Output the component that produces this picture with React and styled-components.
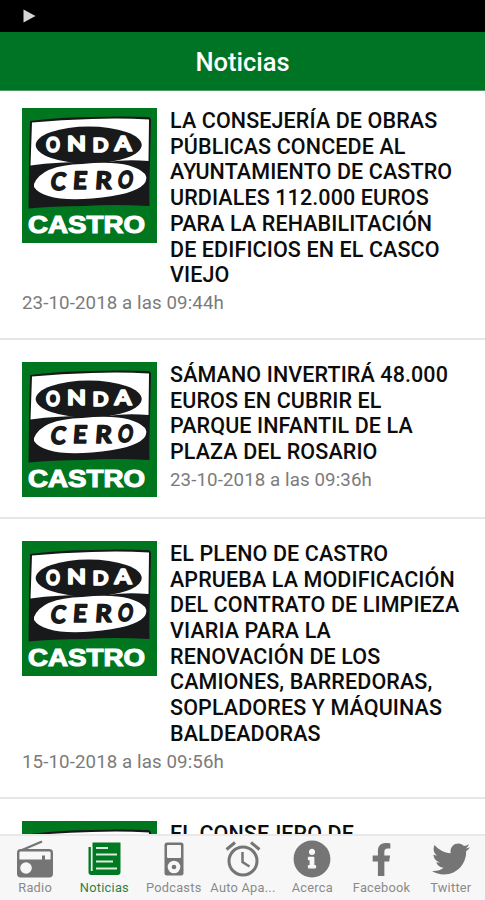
import styled, { createGlobalStyle } from "styled-components";
import { FaFacebookF, FaInfoCircle, FaTwitter } from "react-icons/fa";

const GlobalStyle = createGlobalStyle`
  body{
    margin:0;
    background-color: white;
    font-family: Roboto, "Liberation Sans", sans-serif;
  }
`;

const Screen = styled.div`
  width: 485px;
  height: 900px;
  display: flex;
  flex-direction: column;
  overflow: hidden;
  background-color: white;
`;

const StatusBar = styled.div`
  flex: 0 0 32px;
  display: flex;
  align-items: center;
  padding-left: 23px;
  background-color: black;
`;

const Header = styled.header`
  flex: 0 0 59px;
  display: flex;
  align-items: center;
  justify-content: center;
  box-sizing: border-box;
  padding-top: 2px;
  border-bottom: 1px solid #4f9a62;
  background-color: #007425;
  color: white;
`;

const HeaderTitle = styled.h1`
  margin: 0;
  font-size: 25.5px;
  font-weight: 500;
`;

const NewsList = styled.main`
  flex: 1;
  overflow: hidden;
`;

const NewsItem = styled.article`
  display: flow-root;
  padding: 22px 22px 20px;
  border-bottom: 2px solid #e6e6e6;
  &:first-child{
    padding-top: 17px;
  }
`;

const Logo = styled.svg`
  float: left;
  width: 135px;
  height: 135px;
  margin-right: 13px;
`;

const NewsTitle = styled.h2`
  display: flow-root;
  margin: 0;
  font-size: 21.5px;
  font-weight: 500;
  line-height: 25.7px;
  letter-spacing: 0.11px;
  white-space: pre-line;
  color: #0c0c0c;
`;

const NewsDate = styled.p`
  margin: 0;
  font-size: 18.7px;
  line-height: 30px;
  letter-spacing: 0.1px;
  color: #7b7b7b;
`;

const TabBar = styled.nav`
  flex: 0 0 66px;
  display: grid;
  grid-template-columns: repeat(7, 1fr);
  box-sizing: border-box;
  border-top: 2px solid #e9e9e9;
  background-color: #f7f7f7;
`;

const Tab = styled.div`
  display: flex;
  flex-direction: column;
  align-items: center;
  padding-top: 4px;
  padding-left: 1px;
  color: ${({ $active }) => ($active ? "#007a22" : "#757575")};
`;

const TabIcon = styled.span`
  height: 38px;
  display: flex;
  align-items: center;
`;

const TabLabel = styled.span`
  font-size: 12.8px;
  line-height: 19px;
  letter-spacing: 0.25px;
  white-space: nowrap;
  color: ${({ $active }) => ($active ? "#2f8049" : "#8a8a8a")};
`;

const LogoLetter = styled.text`
  font-family: Lato, sans-serif;
  font-size: ${({ $size }) => $size}px;
  font-weight: 700;
  text-anchor: middle;
  fill: ${({ $color }) => $color};
  stroke: ${({ $color }) => $color};
  stroke-width: 1.6px;
  stroke-linejoin: round;
`;

const LogoTown = styled.text`
  font-family: "Liberation Sans", sans-serif;
  font-size: 23.5px;
  font-weight: 700;
  text-anchor: middle;
  fill: white;
  stroke: white;
  stroke-width: 1.1px;
`;

const letters = [
  { char: "O", x: 31, y: 44.2, size: 20.5, width: 14 },
  { char: "N", x: 54.5, y: 43, size: 20, width: 19 },
  { char: "D", x: 78.5, y: 43.5, size: 19.5, width: 16 },
  { char: "A", x: 101, y: 43.2, size: 20, width: 17 },
  { char: "C", x: 35.5, y: 81.8, size: 24, width: 15, dark: true, skew: -6 },
  { char: "E", x: 57.5, y: 81.2, size: 24, width: 14, dark: true, skew: -4 },
  { char: "R", x: 81, y: 80.6, size: 24, width: 16.5, dark: true, skew: -4 },
  { char: "O", x: 102.5, y: 80.2, size: 23.5, width: 15, dark: true, skew: -8 },
];

function StationLogo() {
  return (
    <Logo viewBox="0 0 135 135">
      <rect width="135" height="135" fill="#00771f" />
      <path d="M8 13 Q40 9 70 9 Q100 8 126 9 Q129 9 129 13 L128 54 Q127 80 127.5 98 Q90 96 62 98 Q30 98 6.5 100.5 L7 58 Z" fill="#17191a" />
      <path d="M10 14.5 Q40 11.5 70 11 Q100 10 127 11.5 L126.5 53 Q105 51 85 54 Q42 53 8.5 57.5 Z" fill="white" />
      <ellipse cx="66.7" cy="37" rx="53" ry="18.5" fill="#17191a" />
      <path d="M12 76 Q20 57 60 56 Q108 51 123 66 Q126 71 122 76 Q112 87 70 90.5 Q22 94 12 79 Z" fill="white" />
      {letters.map(({ char, x, y, size, width, dark, skew = 0 }) => (
        <LogoLetter
          key={x}
          $size={size}
          $color={dark ? "#17191a" : "white"}
          transform={`translate(${x} ${y}) skewX(${skew})`}
          textLength={width}
          lengthAdjust="spacingAndGlyphs"
        >
          {char}
        </LogoLetter>
      ))}
      <LogoTown x="64.5" y="125.3" textLength="117" lengthAdjust="spacingAndGlyphs">CASTRO</LogoTown>
    </Logo>
  );
}

const RadioIcon = () => (
  <svg width="36" height="38" viewBox="0 0 36 38" fill="none">
    <path d="M5 10 L25 1.5" stroke="currentColor" strokeWidth="2.4" />
    <rect x="1.2" y="10.2" width="33.6" height="26" rx="2.5" stroke="currentColor" strokeWidth="2.4" />
    <path d="M1 19.5 H35 V34 Q35 37 32 37 H4 Q1 37 1 34 Z" fill="currentColor" />
    <path d="M26.5 15.5 V20" stroke="currentColor" strokeWidth="3" />
    <circle cx="9" cy="28" r="5.8" fill="#f7f7f7" />
  </svg>
);

const NewsIcon = () => (
  <svg width="33" height="34" viewBox="0 0 33 34" fill="none">
    <path d="M4.5 0.5 H32.5 V30 Q32.5 33 29.5 33 H3.5 Q0.5 33 0.5 30 V5 H3 V29 H4.5 Z" fill="currentColor" />
    <path d="M3.5 5 V29" stroke="#f7f7f7" strokeWidth="1.3" />
    <path d="M8 6 H20 M8 12.5 H29 M8 19.5 H25 M8 26.5 H29" stroke="#dcebdc" strokeWidth="1.8" />
  </svg>
);

const PodcastIcon = () => (
  <svg width="20" height="34" viewBox="0 0 20 34">
    <rect x="0.5" y="0.5" width="19" height="33" rx="2.5" fill="currentColor" />
    <rect x="3" y="3" width="14" height="13" rx="1" fill="#f7f7f7" />
    <circle cx="10" cy="25" r="6.3" fill="#f7f7f7" />
    <circle cx="10" cy="25" r="2.3" fill="currentColor" />
  </svg>
);

const AlarmIcon = () => (
  <svg width="36" height="36" viewBox="0 0 36 36" fill="none" stroke="currentColor">
    <circle cx="18" cy="20" r="14" strokeWidth="3" />
    <path d="M1.5 8.5 L10 1.5 M26 1.5 L34.5 8.5" strokeWidth="3" />
    <path d="M17.5 11 V21 L24.5 25.5" strokeWidth="2.5" />
  </svg>
);

const news = [
  {
    title: "LA CONSEJERÍA DE OBRAS\nPÚBLICAS CONCEDE AL\nAYUNTAMIENTO DE CASTRO\nURDIALES 112.000 EUROS\nPARA LA REHABILITACIÓN\nDE EDIFICIOS EN EL CASCO\nVIEJO",
    date: "23-10-2018 a las 09:44h",
  },
  {
    title: "SÁMANO INVERTIRÁ 48.000\nEUROS EN CUBRIR EL\nPARQUE INFANTIL DE LA\nPLAZA DEL ROSARIO",
    date: "23-10-2018 a las 09:36h",
  },
  {
    title: "EL PLENO DE CASTRO\nAPRUEBA LA MODIFICACIÓN\nDEL CONTRATO DE LIMPIEZA\nVIARIA PARA LA\nRENOVACIÓN DE LOS\nCAMIONES, BARREDORAS,\nSOPLADORES Y MÁQUINAS\nBALDEADORAS",
    date: "15-10-2018 a las 09:56h",
  },
  { title: "EL CONSEJERO DE" },
];

const tabs = [
  { label: "Radio", icon: <RadioIcon /> },
  { label: "Noticias", icon: <NewsIcon />, active: true },
  { label: "Podcasts", icon: <PodcastIcon /> },
  { label: "Auto Apa...", icon: <AlarmIcon /> },
  { label: "Acerca", icon: <FaInfoCircle size={38} /> },
  { label: "Facebook", icon: <FaFacebookF size={33} /> },
  { label: "Twitter", icon: <FaTwitter size={38} /> },
];

function App() {
  return (
    <>
      <GlobalStyle />
      <Screen>
        <StatusBar>
          <svg width="13" height="14" viewBox="0 0 13 14">
            <path d="M0.5 0.5 L12.5 7 L0.5 13.5 Z" fill="#d6d6d6" />
          </svg>
        </StatusBar>
        <Header>
          <HeaderTitle>Noticias</HeaderTitle>
        </Header>
        <NewsList>
          {news.map(({ title, date }) => (
            <NewsItem key={title}>
              <StationLogo />
              <NewsTitle>{title}</NewsTitle>
              {date && <NewsDate>{date}</NewsDate>}
            </NewsItem>
          ))}
        </NewsList>
        <TabBar>
          {tabs.map(({ label, icon, active }) => (
            <Tab key={label} $active={active}>
              <TabIcon>{icon}</TabIcon>
              <TabLabel $active={active}>{label}</TabLabel>
            </Tab>
          ))}
        </TabBar>
      </Screen>
    </>
  );
}

export default App;
